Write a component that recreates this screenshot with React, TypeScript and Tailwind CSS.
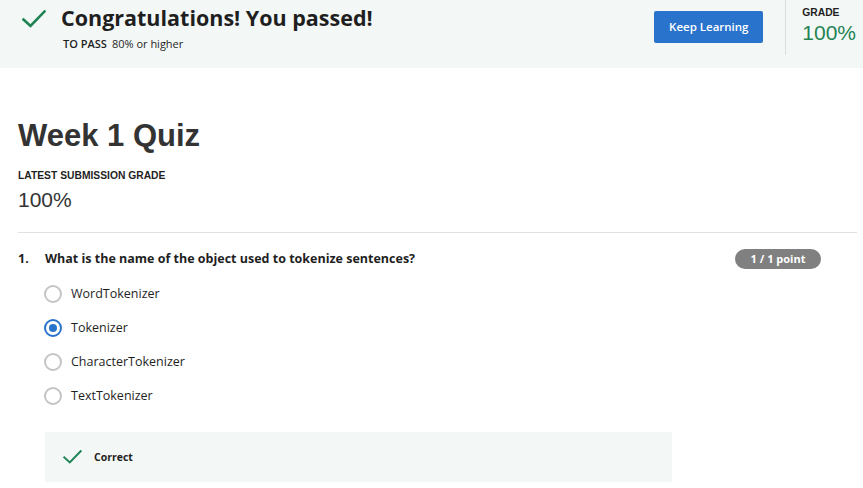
import type { ReactNode } from "react";

const OPTIONS = ["WordTokenizer", "Tokenizer", "CharacterTokenizer", "TextTokenizer"];
const SELECTED = 1;

function Check({ className }: { className?: string }) {
  return (
    <svg viewBox="0 0 24 18" className={className} fill="none">
      <path d="M1.5 9.5 L8.5 16 L22.5 1.5" stroke="#1f8354" strokeWidth={2.6} strokeLinecap="square" />
    </svg>
  );
}

function Radio({ checked }: { checked: boolean }) {
  return checked ? (
    <span className="flex h-[18px] w-[18px] items-center justify-center rounded-full border-2 border-[#2a73cc]">
      <span className="h-[8px] w-[8px] rounded-full bg-[#2a73cc]" />
    </span>
  ) : (
    <span className="h-[18px] w-[18px] rounded-full border-2 border-[#c4c4c4]" />
  );
}

function Label({ children }: { children: ReactNode }) {
  return (
    <div className="font-['Liberation_Sans',Arial,sans-serif] text-[10.3px] font-bold uppercase text-[#1f1f1f]">
      {children}
    </div>
  );
}

export default function App() {
  return (
    <div className="h-[488px] w-[863px] overflow-hidden bg-white font-['Open_Sans',sans-serif] text-[#1f1f1f]">
      {/* pass banner */}
      <div className="flex h-[68px] bg-[#f3f8f6]">
        <div className="flex flex-1 pl-[22px] pt-[9px]">
          <Check className="mt-[1px] h-[18px] w-[24px]" />
          <div className="ml-[15px]">
            <div className="text-[21.5px] leading-[18px] font-bold text-[#1f1f1f]">
              Congratulations! You passed!
            </div>
            <div className="ml-[2px] mt-[10px] flex items-baseline gap-[5px] text-[11px] leading-[14px]">
              <span className="font-semibold">TO PASS</span>
              <span>80% or higher</span>
            </div>
          </div>
        </div>
        <div className="pt-[11px]">
          <button className="h-[32px] w-[109px] rounded-[2px] bg-[#2a73cc] text-[11.5px] font-semibold text-white">
            Keep Learning
          </button>
        </div>
        <div className="ml-[22px] h-[55px] w-px bg-[#dcdcdc]" />
        <div className="pl-[16px] pt-[5px]">
          <Label>Grade</Label>
          <div className="mt-[1px] font-['Liberation_Sans',Arial,sans-serif] text-[21px] leading-[24px] text-[#1f8354]">
            100%
          </div>
        </div>
        <div className="w-[7px]" />
      </div>

      {/* quiz header */}
      <div className="px-[18px] pt-[50px]">
        <h1 className="font-['Liberation_Sans',Arial,sans-serif] text-[31px] leading-[36px] font-bold text-[#333]">
          Week 1 Quiz
        </h1>
        <div className="mt-[14px]">
          <Label>Latest Submission Grade</Label>
        </div>
        <div className="mt-[5px] font-['Liberation_Sans',Arial,sans-serif] text-[21px] leading-[24px] text-[#333]">
          100%
        </div>
        <div className="mt-[20px] mr-[-12px] h-px bg-[#e1e1e1]" />
      </div>

      {/* question */}
      <div className="px-[18px] pt-[16px]">
        <div className="flex items-center">
          <span className="w-[27px] text-[12.5px] font-bold">1.</span>
          <span className="flex-1 text-[12.5px] font-bold">
            What is the name of the object used to tokenize sentences?
          </span>
          <span className="mr-[24px] flex h-[20px] w-[86px] items-center justify-center rounded-full bg-[#808080] text-[11px] font-bold text-white">
            1 / 1 point
          </span>
        </div>
        <div className="ml-[26px] mt-[16px] flex flex-col gap-[16px]">
          {OPTIONS.map((o, i) => (
            <div key={o} className="flex h-[18px] items-center gap-[9px] text-[12.5px]">
              <Radio checked={i === SELECTED} />
              <span className="text-[#1f1f1f]">{o}</span>
            </div>
          ))}
        </div>
        <div className="ml-[27px] mt-[27px] flex h-[50px] w-[627px] items-center bg-[#f3f8f6] pl-[18px]">
          <Check className="h-[14px] w-[19px]" />
          <span className="ml-[12px] text-[10.5px] font-bold">Correct</span>
        </div>
      </div>
    </div>
  );
}
